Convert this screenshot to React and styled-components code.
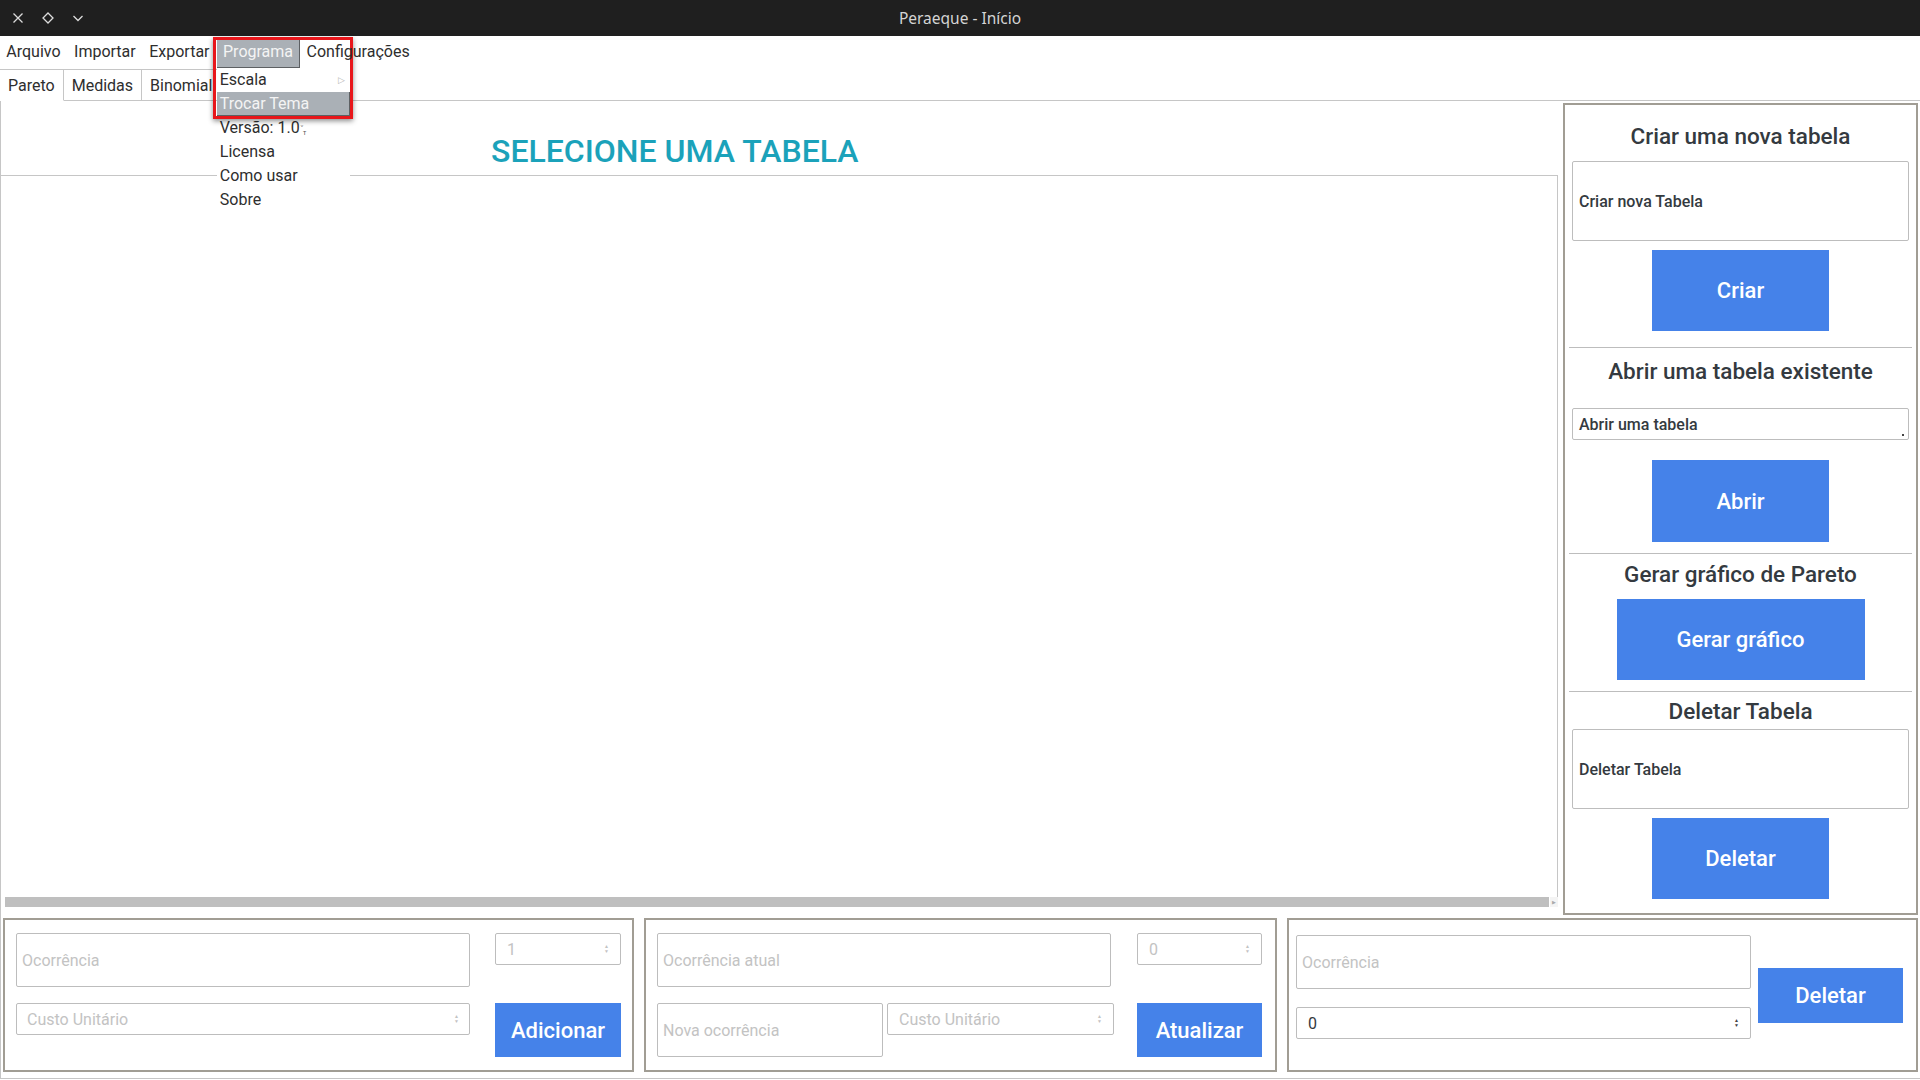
import styled, { createGlobalStyle } from "styled-components";

const GlobalStyle = createGlobalStyle`
  html, body {
    margin: 0;
    padding: 0;
    background: #ffffff;
  }
  body {
    font-family: Roboto, "Noto Sans", sans-serif;
    color: #343a40;
  }
  * {
    box-sizing: border-box;
  }
`;

const Window = styled.div`
  width: 1920px;
  height: 1080px;
  display: flex;
  flex-direction: column;
  overflow: hidden;
  background: #fff;
`;

/* ---------- title bar ---------- */

const TitleBar = styled.div`
  flex-shrink: 0;
  height: 36px;
  background: #1f1f1f;
  display: grid;
  grid-template-columns: 1fr auto 1fr;
  align-items: center;
`;

const TitleControls = styled.div`
  display: flex;
  padding-left: 3px;
`;

const TitleButton = styled.div`
  width: 30px;
  height: 36px;
  display: flex;
  align-items: center;
  justify-content: center;
`;

const TitleText = styled.div`
  font-family: "Noto Sans", "Open Sans", sans-serif;
  font-size: 15.5px;
  color: #d4d4d4;
`;

/* ---------- menu bar ---------- */

const MenuBar = styled.div`
  flex-shrink: 0;
  height: 33px;
  display: flex;
  align-items: flex-end;
  padding-bottom: 1px;
  position: relative;
  z-index: 5;
`;

const MenuItem = styled.div`
  position: relative;
  height: 28px;
  line-height: 23px;
  padding: 0 6.25px;
  font-size: 16px;
  color: ${(p) => (p.$active ? "#f4f4f4" : "#2e2e2e")};
  background: ${(p) => (p.$active ? "#aab0b6" : "transparent")};
  border-right: 1px solid ${(p) => (p.$active ? "#5d6063" : "transparent")};
  border-bottom: 1px solid ${(p) => (p.$active ? "#5d6063" : "transparent")};
`;

const Dropdown = styled.div`
  position: absolute;
  top: 28px;
  left: 0;
  width: 133px;
  background: #fff;
  display: flex;
  flex-direction: column;
`;

const DropItem = styled.div`
  height: 24px;
  line-height: 22px;
  padding: 0 4px 0 3px;
  font-size: 16px;
  display: flex;
  align-items: center;
  justify-content: space-between;
  color: ${(p) => (p.$active ? "#f4f4f4" : "#2e2e2e")};
  background: ${(p) => (p.$active ? "#aab0b6" : "transparent")};
  border-right: 1px solid ${(p) => (p.$active ? "#5d6063" : "transparent")};
  border-bottom: 1px solid ${(p) => (p.$active ? "#5d6063" : "transparent")};
`;

const SubArrow = styled.span`
  font-size: 9px;
  color: #b5b5b5;
`;

const TinyMark = styled.span`
  display: inline-flex;
  font-size: 7px;
  line-height: 1;
  color: #555;
  margin-left: 1px;
  span:first-child {
    transform: translateY(-4px);
  }
  span:last-child {
    transform: translateY(2px);
  }
`;

const Highlight = styled.div`
  position: absolute;
  left: -4px;
  top: -3px;
  width: 140px;
  height: 82px;
  border: 3px solid #e8161b;
  box-shadow: 0 2px 5px rgba(0, 0, 0, 0.45);
  pointer-events: none;
`;

/* ---------- tabs ---------- */

const TabStrip = styled.div`
  flex-shrink: 0;
  height: 32px;
  display: flex;
  border-bottom: 1px solid #c6c6c6;
`;

const Tab = styled.div`
  height: 32px;
  margin-bottom: -1px;
  padding: 0 8px;
  line-height: 32px;
  font-size: 16px;
  color: #2e2e2e;
  background: #fff;
  border-top: 1px solid #c6c6c6;
  border-right: 1px solid #c6c6c6;
  border-bottom: 1px solid ${(p) => (p.$selected ? "#fff" : "#c6c6c6")};
`;

/* ---------- tab pane ---------- */

const Pane = styled.div`
  flex: 1;
  display: flex;
  flex-direction: column;
  border-left: 1px solid #c6c6c6;
  border-bottom: 1px solid #c6c6c6;
  margin-bottom: 1px;
`;

const TopSection = styled.div`
  height: 814px;
  display: flex;
  gap: 5px;
`;

const LeftArea = styled.div`
  width: 1557px;
  height: 806px;
  display: flex;
  flex-direction: column;
`;

const Header = styled.div`
  height: 74px;
  padding: 31px 0 0 490px;
`;

const PageTitle = styled.h1`
  margin: 0;
  font-size: 32px;
  line-height: 38px;
  font-weight: 500;
  color: #1ba2ba;
`;

const TableBox = styled.div`
  flex: 1;
  border-top: 1px solid #c6c6c6;
  border-right: 1px solid #c6c6c6;
`;

const ScrollRow = styled.div`
  height: 10px;
  display: flex;
`;

const ScrollThumb = styled.div`
  flex: 1;
  margin-left: 4px;
  background: #bfbfbf;
`;

const ScrollArrow = styled.div`
  width: 8px;
  margin-left: 1px;
  background: #f4f4f4;
  font-size: 5px;
  color: #aaa;
  display: flex;
  align-items: center;
  justify-content: center;
`;

/* ---------- right panel ---------- */

const SidePanel = styled.div`
  width: 355px;
  height: 812px;
  margin-top: 2px;
  border: 2px solid #a19d94;
  padding: 0 7px;
  display: flex;
  flex-direction: column;
  align-items: center;
`;

const SideHeading = styled.h2`
  margin: ${(p) => p.$mt}px 0 0;
  height: 28px;
  line-height: 27px;
  font-size: 22.5px;
  font-weight: 500;
  color: #343a40;
  text-align: center;
  white-space: nowrap;
`;

const Separator = styled.div`
  align-self: stretch;
  margin: ${(p) => p.$mt}px -3px 0;
  height: 1px;
  background: #bdbdbd;
`;

const Field = styled.div`
  position: relative;
  width: ${(p) => (p.$w ? `${p.$w}px` : "100%")};
  height: ${(p) => p.$h}px;
  margin-top: ${(p) => p.$mt || 0}px;
  border: 1px solid #bdbdbd;
  border-radius: 2px;
  display: flex;
  align-items: center;
  padding: 0 ${(p) => p.$pad ?? 6}px;
  font-size: 16px;
  font-weight: ${(p) => (p.$strong ? 500 : 400)};
  color: ${(p) => (p.$muted ? "#c3c3c3" : "#343a40")};
  background: #fff;
  align-self: ${(p) => (p.$stretch ? "stretch" : "auto")};
`;

const Spinner = styled.span`
  margin-left: auto;
  display: flex;
  flex-direction: column;
  font-size: 5px;
  line-height: 5px;
  color: ${(p) => (p.$dark ? "#444" : "#c3c3c3")};
`;

const ComboMark = styled.span`
  position: absolute;
  right: 4px;
  bottom: 3px;
  width: 2px;
  height: 2px;
  background: #444;
`;

const Button = styled.button`
  width: ${(p) => p.$w}px;
  height: ${(p) => p.$h}px;
  margin-top: ${(p) => p.$mt || 0}px;
  border: none;
  border-radius: 0;
  background: #4582e9;
  color: #fff;
  font-family: Roboto, sans-serif;
  font-size: 22px;
  font-weight: 500;
  padding: 0;
  flex-shrink: 0;
`;

/* ---------- bottom panels ---------- */

const BottomSection = styled.div`
  margin-top: 3px;
  padding-left: 2px;
  display: flex;
  gap: 10px;
`;

const FormPanel = styled.div`
  width: ${(p) => p.$w}px;
  height: 154px;
  border: 2px solid #a19d94;
  padding: ${(p) => p.$pt}px 0 0 ${(p) => p.$pl}px;
  display: grid;
  grid-template-columns: ${(p) => p.$cols};
  grid-template-rows: ${(p) => p.$rows};
  column-gap: ${(p) => p.$gap}px;
  row-gap: ${(p) => p.$rgap}px;
  align-items: start;
`;

const SplitCell = styled.div`
  display: flex;
  gap: 4px;
`;

const SideCell = styled.div`
  grid-row: 1 / span 2;
  grid-column: 2;
  align-self: start;
  margin-top: 33px;
`;

const Icon = ({ children }) => (
  <svg width="12" height="12" viewBox="0 0 12 12" fill="none" stroke="#dcdcdc" strokeWidth="1.3">
    {children}
  </svg>
);

const SpinArrows = ({ dark }) => (
  <Spinner $dark={dark}>
    <span>▲</span>
    <span>▼</span>
  </Spinner>
);

const App = () => {
  return (
    <Window>
      <GlobalStyle />
      <TitleBar>
        <TitleControls>
          <TitleButton>
            <Icon>
              <path d="M1.5 1.5 L10.5 10.5 M10.5 1.5 L1.5 10.5" />
            </Icon>
          </TitleButton>
          <TitleButton>
            <Icon>
              <path d="M6 1 L11 6 L6 11 L1 6 Z" />
            </Icon>
          </TitleButton>
          <TitleButton>
            <Icon>
              <path d="M1.5 4 L6 8.5 L10.5 4" />
            </Icon>
          </TitleButton>
        </TitleControls>
        <TitleText>Peraeque - Início</TitleText>
        <div />
      </TitleBar>

      <MenuBar>
        <MenuItem>Arquivo</MenuItem>
        <MenuItem>Importar</MenuItem>
        <MenuItem>Exportar</MenuItem>
        <MenuItem $active>
          Programa
          <Dropdown>
            <DropItem>
              Escala <SubArrow>▷</SubArrow>
            </DropItem>
            <DropItem $active>Trocar Tema</DropItem>
            <DropItem>
              <span>
                Versão: 1.0
                <TinyMark>
                  <span>ᵛ</span>
                  <span>ᴛ</span>
                </TinyMark>
              </span>
            </DropItem>
            <DropItem>Licensa</DropItem>
            <DropItem>Como usar</DropItem>
            <DropItem>Sobre</DropItem>
          </Dropdown>
          <Highlight />
        </MenuItem>
        <MenuItem>Configurações</MenuItem>
      </MenuBar>

      <TabStrip>
        <Tab $selected>Pareto</Tab>
        <Tab>Medidas</Tab>
        <Tab>Binomial</Tab>
      </TabStrip>

      <Pane>
        <TopSection>
          <LeftArea>
            <Header>
              <PageTitle>SELECIONE UMA TABELA</PageTitle>
            </Header>
            <TableBox />
            <ScrollRow>
              <ScrollThumb />
              <ScrollArrow>▶</ScrollArrow>
            </ScrollRow>
          </LeftArea>

          <SidePanel>
            <SideHeading $mt={18}>Criar uma nova tabela</SideHeading>
            <Field $h={80} $mt={10} $strong $stretch>
              Criar nova Tabela
            </Field>
            <Button $w={177} $h={81} $mt={9}>
              Criar
            </Button>
            <Separator $mt={16} />

            <SideHeading $mt={10}>Abrir uma tabela existente</SideHeading>
            <Field $h={32} $mt={22} $strong $stretch>
              Abrir uma tabela
              <ComboMark />
            </Field>
            <Button $w={177} $h={82} $mt={20}>
              Abrir
            </Button>
            <Separator $mt={11} />

            <SideHeading $mt={7}>Gerar gráfico de Pareto</SideHeading>
            <Button $w={248} $h={81} $mt={10}>
              Gerar gráfico
            </Button>
            <Separator $mt={11} />

            <SideHeading $mt={6}>Deletar Tabela</SideHeading>
            <Field $h={80} $mt={3} $strong $stretch>
              Deletar Tabela
            </Field>
            <Button $w={177} $h={81} $mt={9}>
              Deletar
            </Button>
          </SidePanel>
        </TopSection>

        <BottomSection>
          <FormPanel $w={631} $pt={13} $pl={11} $cols="454px 126px" $rows="54px 54px" $gap={25} $rgap={16}>
            <Field $h={54} $muted $pad={5}>
              Ocorrência
            </Field>
            <Field $h={32} $muted $pad={11}>
              1
              <SpinArrows />
            </Field>
            <Field $h={32} $muted $pad={10}>
              Custo Unitário
              <SpinArrows />
            </Field>
            <Button $w={126} $h={54}>
              Adicionar
            </Button>
          </FormPanel>

          <FormPanel $w={633} $pt={13} $pl={11} $cols="457px 125px" $rows="54px 54px" $gap={23} $rgap={16}>
            <Field $h={54} $w={454} $muted $pad={5}>
              Ocorrência atual
            </Field>
            <Field $h={32} $muted $pad={11}>
              0
              <SpinArrows />
            </Field>
            <SplitCell>
              <Field $h={54} $w={226} $muted $pad={5}>
                Nova ocorrência
              </Field>
              <Field $h={32} $w={227} $muted $pad={11}>
                Custo Unitário
                <SpinArrows />
              </Field>
            </SplitCell>
            <Button $w={125} $h={54}>
              Atualizar
            </Button>
          </FormPanel>

          <FormPanel $w={631} $pt={15} $pl={7} $cols="455px 145px" $rows="54px 32px" $gap={7} $rgap={18}>
            <Field $h={54} $muted $pad={5}>
              Ocorrência
            </Field>
            <SideCell>
              <Button $w={145} $h={55}>
                Deletar
              </Button>
            </SideCell>
            <Field $h={32} $pad={11}>
              0
              <SpinArrows dark />
            </Field>
          </FormPanel>
        </BottomSection>
      </Pane>
    </Window>
  );
};

export default App;
